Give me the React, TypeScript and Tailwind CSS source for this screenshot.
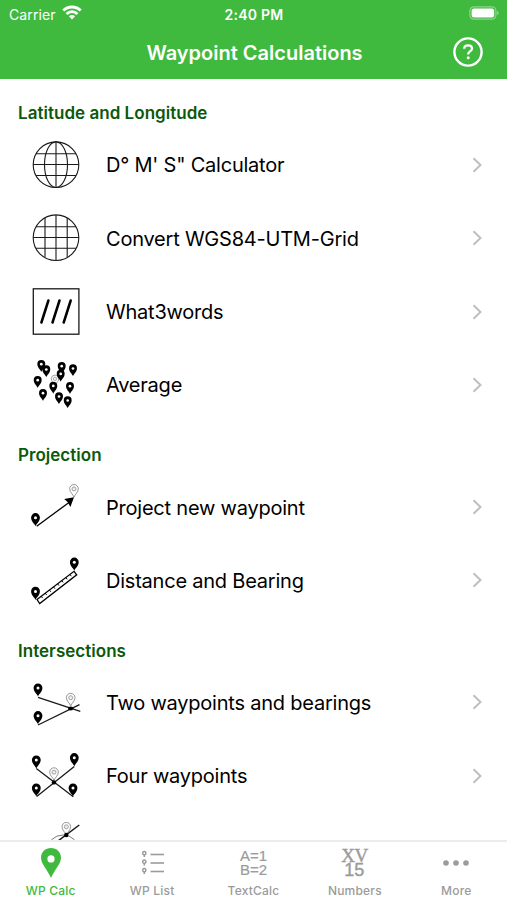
import type { FC, ReactNode } from 'react';
import { useState } from 'react';

type PinProps = {
    x: number;
    y: number;
    scale?: number;
    outline?: boolean;
};

type RowType = {
    label: string;
    icon: ReactNode;
};

type SectionType = {
    title: string;
    rows: RowType[];
};

// x / y is the centre of the pin's head
const Pin: FC<PinProps> = ({ x, y, scale = 1, outline = false }) => (
    <g transform={`translate(${x} ${y}) scale(${scale})`}>
        {outline ? (
            <>
                <path
                    d="M0 7.5C-.8 4.6-4.3 2.8-4.3-.9A4.3 4.3 0 0 1 4.3-.9C4.3 2.8.8 4.6 0 7.5Z"
                    fill="white"
                    stroke="#8a8a8a"
                    strokeWidth="0.9"
                />
                <circle cy="-0.8" r="2" fill="#eee" stroke="#999" strokeWidth="0.9" />
            </>
        ) : (
            <>
                <path d="M0 7.6C-.9 4.8-4.4 3-4.4-1.2A4.4 4.4 0 0 1 4.4-1.2C4.4 3 .9 4.8 0 7.6Z" fill="black" />
                <circle cy="-1" r="1.5" fill="white" />
            </>
        )}
    </g>
);

const RowIcon: FC<{ children: ReactNode }> = ({ children }) => (
    <svg viewBox="0 0 60 60" className="h-15 w-15 shrink-0" fill="none" stroke="none">
        {children}
    </svg>
);

const averagePins = [
    [15.3, 10.1],
    [20.3, 15.4],
    [35.7, 12.1],
    [34.7, 19.8],
    [47, 14.4],
    [11.7, 26.1],
    [27.3, 31.8],
    [44, 32.1],
    [17, 39.1],
    [33, 42.4],
    [41.7, 46.4],
];

const GlobeIcon = () => (
    <RowIcon>
        <g stroke="#1a1a1a" strokeWidth="1.1">
            <circle cx="30" cy="29.7" r="22.8" />
            <ellipse cx="30" cy="29.7" rx="11.5" ry="22.8" />
            <path d="M30 7v45.5M10 18.7h40M7.2 29.5h45.6M10 40.5h40" />
        </g>
    </RowIcon>
);

const GridIcon = () => (
    <RowIcon>
        <g stroke="#1a1a1a" strokeWidth="1.1">
            <circle cx="30" cy="29.7" r="22.8" />
            <path d="M19 10v39.5M30 7v45.5M41.2 10v39.5M10 18.7h40M7.2 29.5h45.6M10 40.2h40" />
        </g>
    </RowIcon>
);

const WordsIcon = () => (
    <RowIcon>
        <rect x="7.3" y="6.8" width="45.6" height="45.4" stroke="#1a1a1a" strokeWidth="1.3" />
        <path
            d="M15.4 40.5l7-22M26.5 40.5l7-22M37.7 40.5l7-22"
            stroke="black"
            strokeWidth="2.5"
            strokeLinecap="round"
        />
    </RowIcon>
);

const AverageIcon = () => (
    <RowIcon>
        <Pin x={29} y={24.5} scale={0.85} outline />
        {averagePins.map(([x, y]) => (
            <Pin key={`${x}-${y}`} x={x} y={y} scale={0.9} />
        ))}
    </RowIcon>
);

const ProjectIcon = () => (
    <RowIcon>
        <path d="M10.7 49.3L44 24.7" stroke="black" strokeWidth="1.3" />
        <path d="M48 20.3l-9.8 1.7 3.4 2.9 2.8 5z" fill="black" />
        <Pin x={9.5} y={41.7} />
        <Pin x={48} y={12.7} outline />
    </RowIcon>
);

const DistanceIcon = () => (
    <RowIcon>
        <path d="M11 49.5L48 21.3l2.7 3.5L13.7 53.5z" stroke="black" strokeWidth="1.3" />
        <path
            d="M15.2 46.3l1.4 1.8M19.3 43.2l1.4 1.8M23.4 40l1.4 1.8M27.5 36.9l1.4 1.8M31.6 33.8l1.4 1.8M35.7 30.6l1.4 1.8M39.8 27.5l1.4 1.8M43.9 24.4l1.4 1.8"
            stroke="black"
            strokeWidth="1"
        />
        <Pin x={9.5} y={42.4} />
        <Pin x={48.3} y={13.2} />
    </RowIcon>
);

const TwoWaypointsIcon = () => (
    <RowIcon>
        <path d="M12 25.3l42.3 14M12 53l41.5-20.3" stroke="#1a1a1a" strokeWidth="1.3" />
        <Pin x={44.7} y={26.5} outline />
        <ellipse cx="44.7" cy="36.5" rx="2.6" ry="2" fill="black" />
        <Pin x={12} y={17} />
        <Pin x={12} y={44.7} />
    </RowIcon>
);

const FourWaypointsIcon = () => (
    <RowIcon>
        <path d="M10.3 22.4l37 28.3M48.3 20.4l-37.6 30" stroke="#1a1a1a" strokeWidth="1.3" />
        <Pin x={28} y={27} outline />
        <circle cx="27.9" cy="36.4" r="2.2" fill="black" />
        <Pin x={10.3} y={15} />
        <Pin x={48.3} y={12.7} />
        <Pin x={10.3} y={43} />
        <Pin x={47} y={43} />
    </RowIcon>
);

const CircleLineIcon = () => (
    <RowIcon>
        <circle cx="37" cy="32" r="16" stroke="#777" strokeWidth="1" />
        <path d="M53.3 6L30 23.5" stroke="#1a1a1a" strokeWidth="1.5" />
        <Pin x={40.3} y={8.6} outline />
        <circle cx="40.3" cy="16" r="2.2" fill="black" />
    </RowIcon>
);

const sections: SectionType[] = [
    {
        title: 'Latitude and Longitude',
        rows: [
            { label: `D° M' S" Calculator`, icon: <GlobeIcon /> },
            { label: 'Convert WGS84-UTM-Grid', icon: <GridIcon /> },
            { label: 'What3words', icon: <WordsIcon /> },
            { label: 'Average', icon: <AverageIcon /> },
        ],
    },
    {
        title: 'Projection',
        rows: [
            { label: 'Project new waypoint', icon: <ProjectIcon /> },
            { label: 'Distance and Bearing', icon: <DistanceIcon /> },
        ],
    },
    {
        title: 'Intersections',
        rows: [
            { label: 'Two waypoints and bearings', icon: <TwoWaypointsIcon /> },
            { label: 'Four waypoints', icon: <FourWaypointsIcon /> },
            { label: '', icon: <CircleLineIcon /> },
        ],
    },
];

const tabs: RowType[] = [
    {
        label: 'WP Calc',
        icon: (
            <svg viewBox="0 0 22 32" className="ml-px h-8 w-[22px]" fill="currentColor">
                <path
                    fillRule="evenodd"
                    d="M11 1C5.3 1 1 5.2 1 10.7 1 17 7.5 22.5 11 31c3.5-8.5 10-14 10-20.3C21 5.2 16.7 1 11 1Zm0 7.3a3.6 3.6 0 1 1 0 7.2 3.6 3.6 0 0 1 0-7.2Z"
                />
            </svg>
        ),
    },
    {
        label: 'WP List',
        icon: (
            <svg viewBox="0 0 24 26" className="ml-px h-[26px] w-6" fill="none" stroke="currentColor">
                {[4, 12.5, 21].map(y => (
                    <g key={y}>
                        <path d={`M9.5 ${y + 0.5}h13.5`} strokeWidth="1.6" />
                        <circle cx="3.3" cy={y - 0.8} r="1.6" strokeWidth="1.5" />
                        <path d={`M3.3 ${y + 0.8}v2.2`} strokeWidth="1.6" />
                    </g>
                ))}
            </svg>
        ),
    },
    {
        label: 'TextCalc',
        icon: (
            <div className="text-center font-['Liberation_Sans',sans-serif] text-[15px] leading-[14px] [-webkit-text-stroke:0.2px]">
                <div>A=1</div>
                <div>B=2</div>
            </div>
        ),
    },
    {
        label: 'Numbers',
        icon: (
            <div className="-ml-px text-center leading-[15px] [-webkit-text-stroke:0.4px]">
                <div className="font-['Liberation_Serif',serif] text-[19px] tracking-[-0.5px]">XV</div>
                <div className="font-['Liberation_Sans',sans-serif] text-[18px]">15</div>
            </div>
        ),
    },
    {
        label: 'More',
        icon: (
            <svg viewBox="0 0 28 6" className="h-1.5 w-7" fill="currentColor">
                <circle cx="4" cy="3" r="2.8" />
                <circle cx="14" cy="3" r="2.8" />
                <circle cx="24" cy="3" r="2.8" />
            </svg>
        ),
    },
];

const Header = () => (
    <header className="h-[79.4px] shrink-0 bg-[#40b93f] text-white">
        <div className="grid h-7 grid-cols-3 items-center pr-2 pl-[9px] text-[14px]">
            <div className="flex items-center gap-1.5">
                <span className="tracking-[0.1px]">Carrier</span>
                <svg viewBox="0 0 20 15" className="-mt-1 h-[15px] w-5" fill="none" stroke="white" strokeWidth="2.8">
                    <path d="M1.3 5.6a12.3 12.3 0 0 1 17.4 0M4.6 8.9a7.6 7.6 0 0 1 10.8 0" />
                    <path d="M10 14.5l-3.1-3.2a4.4 4.4 0 0 1 6.2 0z" fill="white" stroke="none" />
                </svg>
            </div>
            <span className="text-center font-semibold tracking-[0.25px]">2:40 PM</span>
            <svg viewBox="0 0 30 14" className="-mt-0.5 h-3.5 w-[30px] justify-self-end" fill="none">
                <rect x="0.9" y="0.8" width="26" height="12.4" rx="4" stroke="white" strokeOpacity="0.4" strokeWidth="1.2" />
                <rect x="2.6" y="2.5" width="22.6" height="9" rx="2.5" fill="white" />
                <path d="M28.2 5v4c1.8-.7 1.8-3.3 0-4z" fill="white" fillOpacity="0.5" />
            </svg>
        </div>
        <div className="grid h-[49px] grid-cols-[1fr_auto_1fr] items-center pr-6 pl-[26px]">
            <h1 className="col-start-2 text-[20px] font-semibold">Waypoint Calculations</h1>
            <button type="button" aria-label="Help" className="-mt-px justify-self-end">
                <svg viewBox="0 0 30 30" className="block h-[30px] w-[30px]" fill="none" stroke="white">
                    <circle cx="15" cy="15" r="13.6" strokeWidth="2.4" />
                    <path d="M11.2 11.7c0-2 1.6-3.3 3.9-3.3s3.9 1.2 3.9 3.2c0 2.9-3.8 2.7-3.8 5.5v.4" strokeWidth="2.3" />
                    <circle cx="15.2" cy="20.8" r="1.5" fill="white" stroke="none" />
                </svg>
            </button>
        </div>
    </header>
);

const App: FC = () => {
    const [activeTab, setActiveTab] = useState('WP Calc');

    return (
        <div className="flex h-[900px] w-full flex-col overflow-hidden bg-white font-['Inter',sans-serif] text-black">
            <Header />

            <main className="min-h-0 flex-1 overflow-hidden">
                {sections.map(section => (
                    <section key={section.title}>
                        <h2 className="h-[48.9px] pt-[22.7px] pl-[18px] text-[17px] leading-[22px] font-semibold tracking-[0.03px] text-[#0b590b]">
                            {section.title}
                        </h2>
                        {section.rows.map(row => (
                            <div key={row.label} className="flex h-[73.3px] items-center pr-[25px] pl-[26px]">
                                {row.icon}
                                <span className="ml-5 flex-1 pt-px text-[20px] tracking-[-0.22px] whitespace-nowrap">
                                    {row.label}
                                </span>
                                <svg viewBox="0 0 10 16" className="h-4 w-2.5" fill="none" stroke="#bfbfc1" strokeWidth="2">
                                    <path d="M1.5 1.2L8.5 8l-7 6.8" />
                                </svg>
                            </div>
                        ))}
                    </section>
                ))}
            </main>

            <nav className="grid h-[60px] shrink-0 grid-cols-5 border-t-2 border-[#ececec] bg-white">
                {tabs.map(tab => (
                    <button
                        key={tab.label}
                        type="button"
                        onClick={() => setActiveTab(tab.label)}
                        className={`flex flex-col items-center ${activeTab === tab.label ? 'text-[#40b93f]' : 'text-[#9b9b9b]'}`}
                    >
                        <span className="flex h-[42px] items-center justify-center">{tab.icon}</span>
                        <span className="text-[12px] leading-[14px] font-medium tracking-[0.2px]">{tab.label}</span>
                    </button>
                ))}
            </nav>
        </div>
    );
};

export default App;
